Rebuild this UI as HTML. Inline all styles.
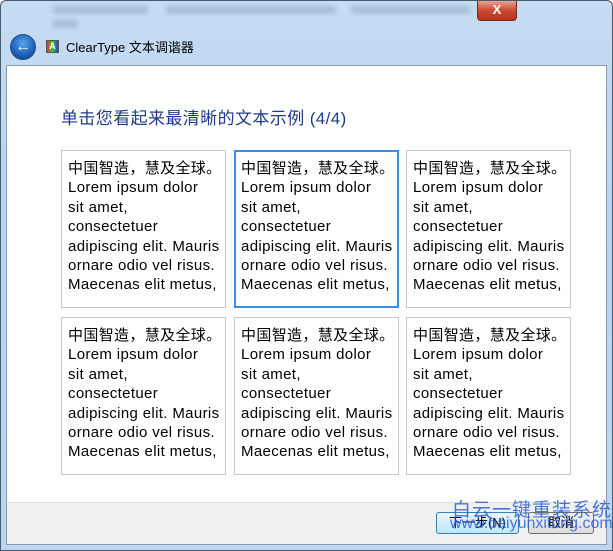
<!DOCTYPE html><html><head><meta charset="utf-8"><style>
body{margin:0;width:613px;height:551px;overflow:hidden;font-family:"Liberation Sans","Noto Sans CJK SC",sans-serif;}
.win{position:absolute;left:0;top:0;width:611px;height:549px;border:1px solid #4a5b70;border-radius:6px 6px 0 0;background:linear-gradient(180deg,#c6dcf2 0%,#b7d4f2 40%,#bcd6f0 100%);}
.blur{position:absolute;top:5px;height:8px;background:#9fb4cc;filter:blur(2px);opacity:.7}
.close{position:absolute;left:476px;top:0;width:38px;height:19px;background:linear-gradient(#e8a392,#c84a30 50%,#b73418);border:1px solid #6d2a1f;border-top:none;border-radius:0 0 4px 4px;color:#fff;font-weight:bold;font-size:13px;text-align:center;line-height:18px}
.back{position:absolute;left:9px;top:33px;width:24px;height:24px;border-radius:50%;background:radial-gradient(circle at 50% 35%,#5aa4ec,#1a5fb8 60%,#0b3d84);border:1px solid #2a4f86;color:#fff;font-size:16px;font-weight:bold;text-align:center;line-height:23px}
.ic{position:absolute;left:45px;top:39px;width:11px;height:11px;border:1px solid #555;background:linear-gradient(90deg,#e33,#3c3,#33e);font-size:9px;color:#fff;text-align:center;line-height:11px;font-weight:bold}
.tt{position:absolute;left:65px;top:36px;font-size:13px;color:#000}
.content{position:absolute;left:6px;top:65px;width:599px;height:437px;background:#fff;border:1px solid #8a99ad;border-bottom:none}
.foot{position:absolute;left:6px;top:502px;width:599px;height:41px;background:#f0f0f0;border:1px solid #8a99ad;border-top:1px solid #dfdfdf}
.h{position:absolute;left:61px;top:104px;font-size:17px;letter-spacing:0.4px;color:#1e3a8c}
.card{position:absolute;width:165px;height:158px;border:1px solid #c8c8c8;box-sizing:border-box;padding:8px 0 0 6px;font-size:15px;letter-spacing:0.35px;line-height:19.4px;color:#000;white-space:nowrap;overflow:hidden}
.sel{border:2px solid #3b8ee8;padding:7px 0 0 5px}
.btn{position:absolute;top:512px;height:20px;border:1px solid #707070;border-radius:3px;background:linear-gradient(#f2f2f2,#dcdcdc);font-size:13px;text-align:center;line-height:20px}
.wm{position:absolute;font-family:"Noto Sans CJK SC",sans-serif;color:#2a5fd8;opacity:.85}
</style></head><body>
<div class="win">
<div class="blur" style="left:52px;width:95px"></div><div class="blur" style="left:165px;width:170px"></div><div class="blur" style="left:350px;width:120px"></div><div class="blur" style="left:52px;top:19px;width:25px"></div>
<div class="close">X</div>
<div class="back">&#8592;</div><div class="ic">A</div>
<div class="tt">ClearType 文本调谐器</div>
</div>
<div class="content"></div>
<div class="foot"></div>
<div class="h">单击您看起来最清晰的文本示例 (4/4)</div>
<div class="card" style="left:61px;top:150px">中国智造，慧及全球。<br>Lorem ipsum dolor<br>sit amet,<br>consectetuer<br>adipiscing elit. Mauris<br>ornare odio vel risus.<br>Maecenas elit metus,</div>
<div class="card sel" style="left:234px;top:150px">中国智造，慧及全球。<br>Lorem ipsum dolor<br>sit amet,<br>consectetuer<br>adipiscing elit. Mauris<br>ornare odio vel risus.<br>Maecenas elit metus,</div>
<div class="card" style="left:406px;top:150px">中国智造，慧及全球。<br>Lorem ipsum dolor<br>sit amet,<br>consectetuer<br>adipiscing elit. Mauris<br>ornare odio vel risus.<br>Maecenas elit metus,</div>
<div class="card" style="left:61px;top:317px">中国智造，慧及全球。<br>Lorem ipsum dolor<br>sit amet,<br>consectetuer<br>adipiscing elit. Mauris<br>ornare odio vel risus.<br>Maecenas elit metus,</div>
<div class="card" style="left:234px;top:317px">中国智造，慧及全球。<br>Lorem ipsum dolor<br>sit amet,<br>consectetuer<br>adipiscing elit. Mauris<br>ornare odio vel risus.<br>Maecenas elit metus,</div>
<div class="card" style="left:406px;top:317px">中国智造，慧及全球。<br>Lorem ipsum dolor<br>sit amet,<br>consectetuer<br>adipiscing elit. Mauris<br>ornare odio vel risus.<br>Maecenas elit metus,</div>
<div class="btn" style="left:436px;width:81px;border-color:#3c7fb1;background:linear-gradient(#eaf6fd,#bee6fd)">下一步(N)</div>
<div class="btn" style="left:528px;width:64px">取消</div>
<div class="wm" style="left:452px;top:495px;font-size:19px;letter-spacing:1px">白云一键重装系统</div>
<div class="wm" style="left:450px;top:515px;font-size:16px;font-family:'Liberation Sans',sans-serif">www.baiyunxitong.com</div>
</body></html>
